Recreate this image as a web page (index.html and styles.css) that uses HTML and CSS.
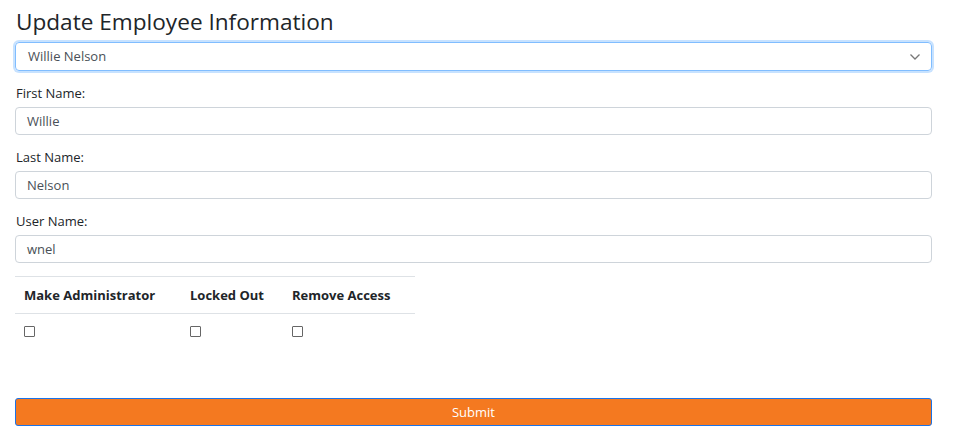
FILE: index.html
```html
<!DOCTYPE html>
<html>
<head>
<meta charset="utf-8">
<link rel="stylesheet" href="styles.css">
</head>
<body>
<div class="page">
  <h2 class="title">Update Employee Information</h2>
  <div class="select-wrap">
    <div class="select">Willie Nelson</div>
    <svg class="chev" width="12" height="8" viewBox="0 0 12 8"><path d="M1.5 1.5 L6 6 L10.5 1.5" fill="none" stroke="#777" stroke-width="1.3"/></svg>
  </div>
  <div class="field">
    <label class="label">First Name:</label>
    <div class="input">Willie</div>
  </div>
  <div class="field">
    <label class="label">Last Name:</label>
    <div class="input">Nelson</div>
  </div>
  <div class="field">
    <label class="label">User Name:</label>
    <div class="input">wnel</div>
  </div>
  <table class="perm">
    <thead>
      <tr><th class="c1">Make Administrator</th><th class="c2">Locked Out</th><th class="c3">Remove Access</th></tr>
    </thead>
    <tbody>
      <tr><td><span class="cb"></span></td><td><span class="cb"></span></td><td><span class="cb"></span></td></tr>
    </tbody>
  </table>
  <button class="submit">Submit</button>
</div>
</body>
</html>
```

FILE: styles.css
```css
* { box-sizing: border-box; }
html, body { margin: 0; padding: 0; background: #fff; }
body { font-family: "Open Sans", "Noto Sans", sans-serif; color: #212529; font-size: 13px; }
.page { padding: 0 26px 0 15px; display: flex; flex-direction: column; }
.title { font-weight: 400; font-size: 22.6px; line-height: 28px; margin: 8px 0 6px 1px; color: #212529; }
.select-wrap { position: relative; }
.select { height: 29px; border: 1px solid #80bdff; border-radius: 4px; box-shadow: 0 0 0 2px rgba(0,123,255,.22); padding: 0 12px; line-height: 27px; color: #495057; }
.chev { position: absolute; right: 11px; top: 11px; }
.field { display: flex; flex-direction: column; }
.label { margin-top: 14px; line-height: 16px; margin-bottom: 6px; padding-left: 1px; }
.input { height: 28px; border: 1px solid #ced4da; border-radius: 4px; padding: 0 11px; line-height: 26px; color: #495057; }
.perm { border-collapse: collapse; width: 400px; margin-top: 13px; table-layout: fixed; }
.perm .c1 { width: 166px; }
.perm .c2 { width: 102px; }
.perm .c3 { width: 132px; }
.perm th { text-align: left; font-weight: 700; padding: 9px 9px 8px; border-top: 1px solid #dee2e6; border-bottom: 1px solid #dee2e6; line-height: 19px; white-space: nowrap; }
.perm td { padding: 12px 9px 8px; line-height: 13px; }
.cb { display: block; width: 11px; height: 11px; border: 1px solid #666; background: #fff; border-radius: 1px; }
.submit { margin-top: 53px; height: 28px; background: #f47920; color: #fff; border: 1px solid #1a73e8; border-radius: 3px; font-family: inherit; font-size: 13px; padding: 0; }
```
